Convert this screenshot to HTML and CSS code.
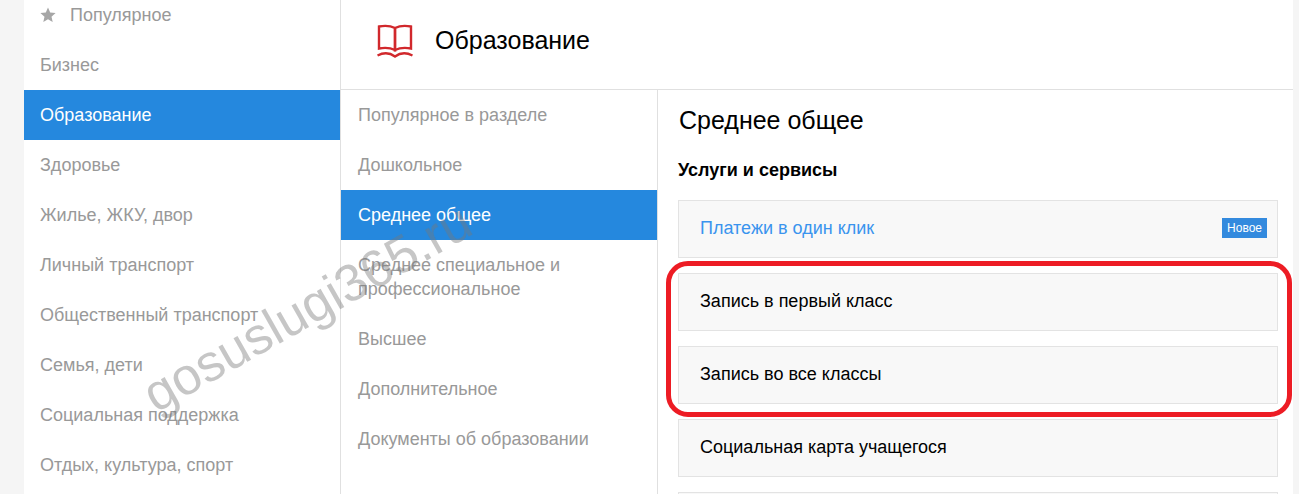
FILE: index.html
```html
<!DOCTYPE html>
<html lang="ru">
<head>
  <meta charset="UTF-8">
  <title>Образование</title>
  <link rel="stylesheet" href="styles.css">
</head>
<body>
  <div class="page">
    <ul class="menu main-menu">
      <li class="menu-item">
        <svg class="star" viewBox="0 0 16 16"><path d="M8 .6l2.200 5 5.400.5-4.100 3.600 1.200 5.300L8 12.200 3.300 15l1.200-5.300L.4 6.100l5.400-.5z"/></svg>
        Популярное
      </li>
      <li class="menu-item">Бизнес</li>
      <li class="menu-item active">Образование</li>
      <li class="menu-item">Здоровье</li>
      <li class="menu-item">Жилье, ЖКУ, двор</li>
      <li class="menu-item">Личный транспорт</li>
      <li class="menu-item">Общественный транспорт</li>
      <li class="menu-item">Семья, дети</li>
      <li class="menu-item">Социальная поддержка</li>
      <li class="menu-item">Отдых, культура, спорт</li>
    </ul>

    <div class="section">
      <div class="section-head">
        <svg class="book" viewBox="0 0 36 34" fill="none" stroke="#d1282c" stroke-width="2.400">
          <path d="M2 2.500c6-1.200 11-1 16 1.500v22c-5-2.400-10-2.600-16-1.500z"/>
          <path d="M34 2.500c-6-1.200-11-1-16 1.500v22c5-2.400 10-2.600 16-1.500z"/>
          <path d="M.5 31.500c6-3 12-3 17.500 1 5.500-4 11.500-4 17.500-1"/>
        </svg>
        <h1 class="section-title">Образование</h1>
      </div>

      <div class="section-body">
        <ul class="menu sub-menu">
          <li class="menu-item">Популярное в разделе</li>
          <li class="menu-item">Дошкольное</li>
          <li class="menu-item active">Среднее общее</li>
          <li class="menu-item two-lines">Среднее специальное и профессиональное</li>
          <li class="menu-item">Высшее</li>
          <li class="menu-item">Дополнительное</li>
          <li class="menu-item">Документы об образовании</li>
        </ul>

        <div class="content">
          <h2 class="content-title">Среднее общее</h2>
          <h3 class="content-sub">Услуги и сервисы</h3>
          <div class="cards">
            <div class="card card-link">Платежи в один клик <span class="badge">Новое</span></div>
            <div class="card">Запись в первый класс</div>
            <div class="card">Запись во все классы</div>
            <div class="card">Социальная карта учащегося</div>
            <div class="card"></div>
          </div>
          <div class="highlight"></div>
        </div>
      </div>
    </div>

    <div class="watermark">gosuslugi365.ru</div>
  </div>
</body>
</html>
```

FILE: styles.css
```css
html, body {
  margin: 0;
  padding: 0;
  height: 494px;
  overflow: hidden;
  background: #f5f5f5;
  font-family: "Liberation Sans", Arial, sans-serif;
  font-size: 18px;
}
.page {
  position: relative;
  display: flex;
  width: 1269px;
  height: 494px;
  margin-left: 24px;
  background: #fff;
  overflow: hidden;
}
.menu {
  list-style: none;
  margin: 0;
  padding: 0;
}
.main-menu {
  flex: none;
  width: 316px;
  margin-top: -10px;
}
.menu-item {
  display: flex;
  align-items: center;
  height: 50px;
  padding: 0 16px;
  box-sizing: border-box;
  color: #999;
  line-height: 24px;
}
.menu-item.active {
  background: #2588de;
  color: #fff;
}
.two-lines {
  height: 74px;
}
.star {
  width: 16px;
  height: 16px;
  margin-right: 14px;
  fill: #a6a6a6;
}
.section {
  flex: 1;
  border-left: 1px solid #e0e0e0;
  min-width: 0;
}
.section-head {
  display: flex;
  align-items: center;
  height: 81px;
  padding: 0 0 8px 36px;
  border-bottom: 1px solid #e0e0e0;
}
.book {
  width: 36px;
  height: 34px;
  margin-right: 22px;
}
.section-title {
  margin: 0;
  font-size: 25px;
  font-weight: normal;
  color: #000;
}
.section-body {
  display: flex;
  height: 404px;
}
.sub-menu {
  flex: none;
  width: 316px;
}
.sub-menu .menu-item {
  padding-left: 17px;
}
.content {
  position: relative;
  flex: 1;
  padding: 0 15px 0 20px;
  border-left: 1px solid #e0e0e0;
}
.content-title {
  margin: 16px 0 0 1px;
  font-size: 25px;
  line-height: 28px;
  font-weight: normal;
  color: #000;
}
.content-sub {
  margin: 26px 0 0;
  font-size: 18px;
  line-height: 20px;
  font-weight: bold;
  color: #000;
}
.cards {
  display: flex;
  flex-direction: column;
  gap: 15px;
  margin-top: 20px;
}
.card {
  display: flex;
  flex: none;
  align-items: center;
  justify-content: space-between;
  height: 58px;
  box-sizing: border-box;
  padding: 0 10px 2px 21px;
  background: #f8f8f8;
  border: 1px solid #e3e3e3;
  color: #000;
}
.card-link {
  color: #3a94ee;
}
.badge {
  padding: 0 5px;
  background: #338ade;
  color: #fff;
  font-size: 12px;
  line-height: 20px;
}
.highlight {
  position: absolute;
  left: 8px;
  top: 171px;
  width: 616px;
  height: 146px;
  border: 5px solid #ed1c24;
  border-radius: 22px;
}
.watermark {
  position: absolute;
  left: 138px;
  top: 364px;
  font-size: 52px;
  line-height: 60px;
  color: rgba(120, 120, 120, 0.42);
  white-space: nowrap;
  transform: rotate(-29.500deg);
  transform-origin: 0 100%;
  pointer-events: none;
}
```
